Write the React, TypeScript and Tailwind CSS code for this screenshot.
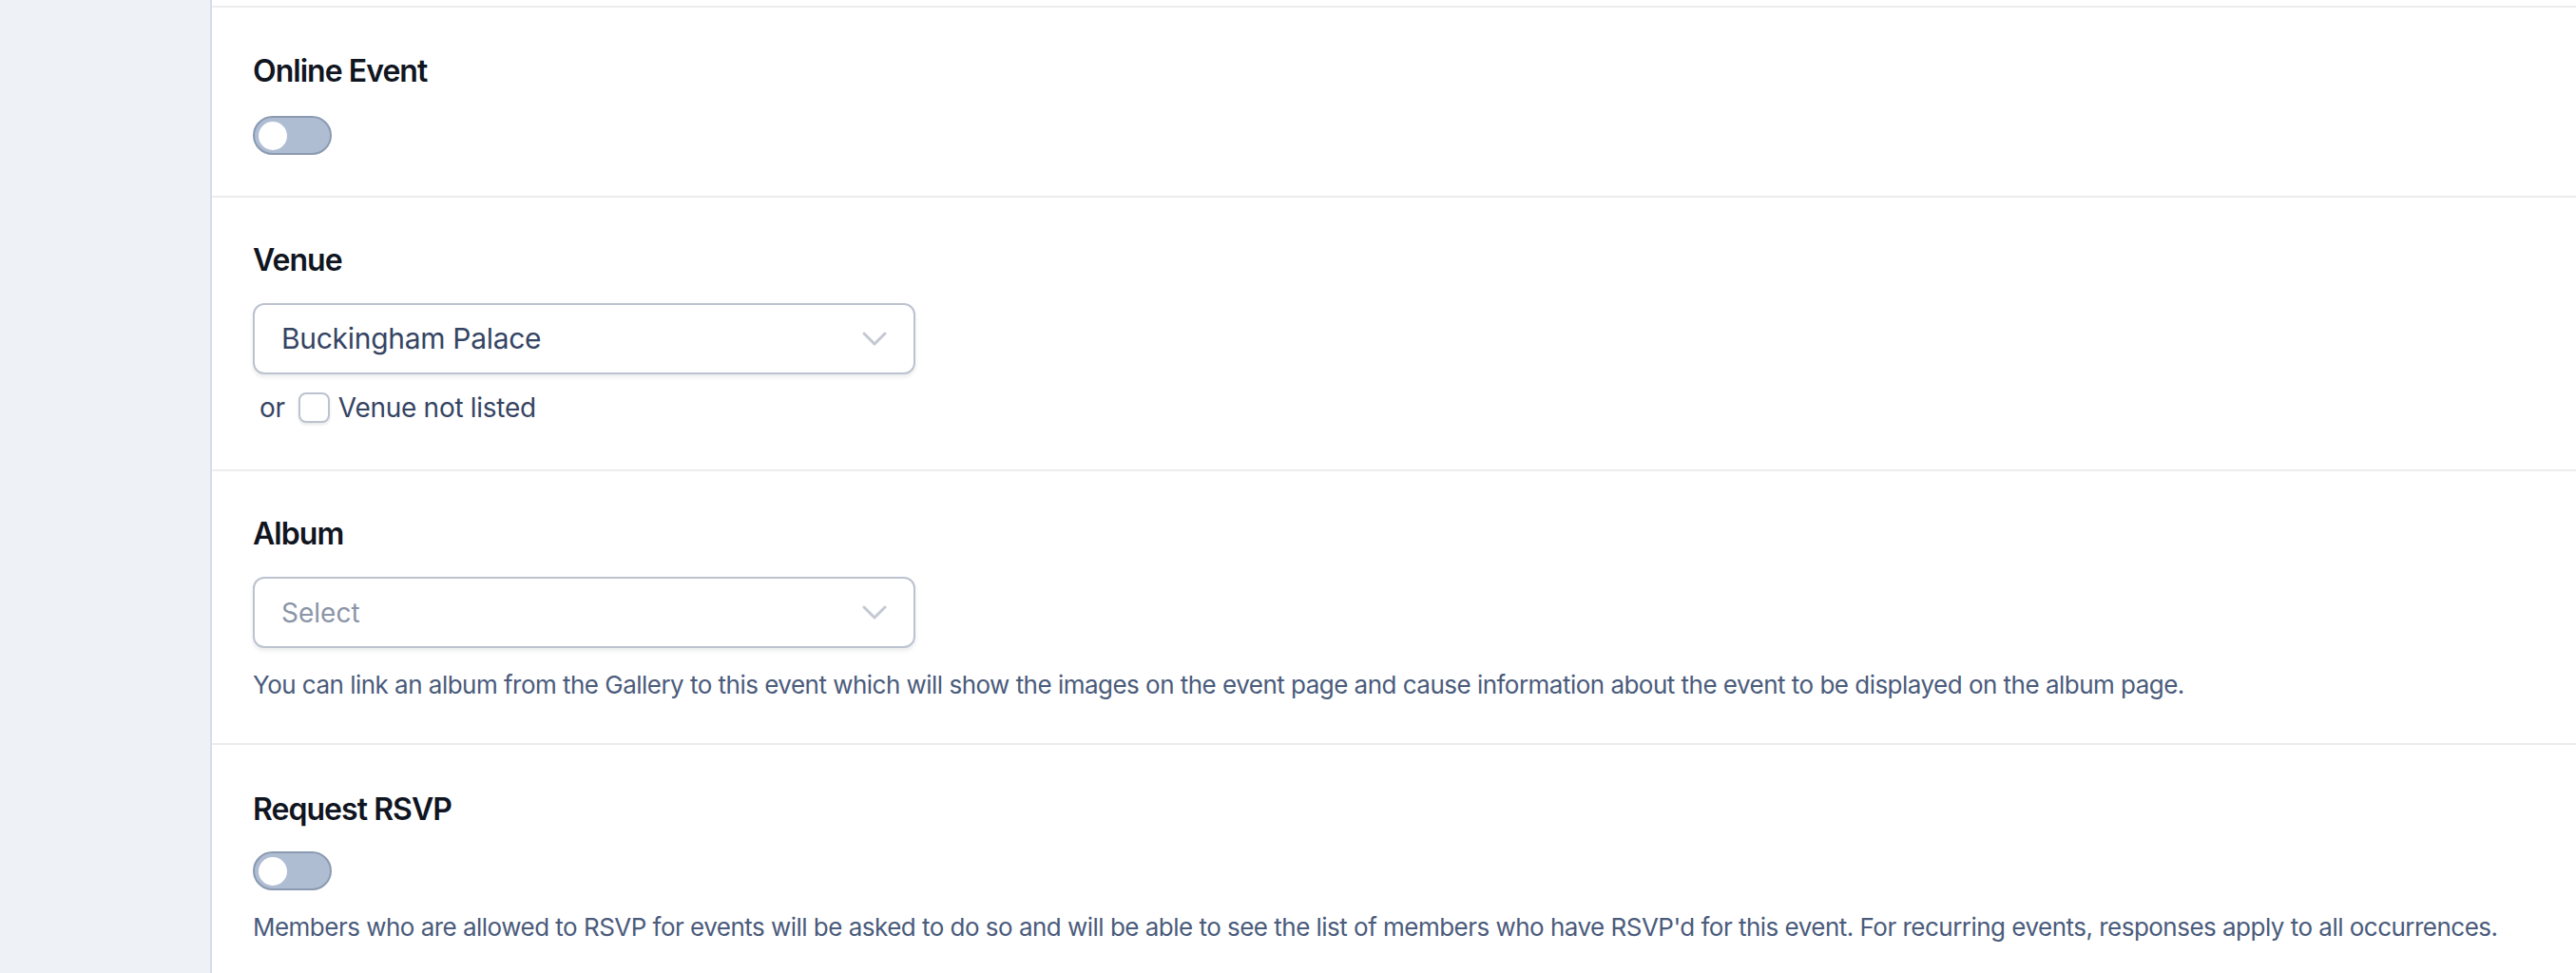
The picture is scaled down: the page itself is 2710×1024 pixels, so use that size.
import { useState } from "react";

function Toggle({ on, onChange }: { on: boolean; onChange: (v: boolean) => void }) {
  return (
    <button
      type="button"
      onClick={() => onChange(!on)}
      className={`flex h-[41px] w-[83px] items-center rounded-full border-2 px-[4px] ${
        on ? "justify-end border-[#3b6fd1] bg-[#4f86e8]" : "justify-start border-[#8b9ab1] bg-[#afbdd3]"
      }`}
    >
      <span className="block h-[30px] w-[30px] rounded-full bg-white" />
    </button>
  );
}

function Chevron() {
  return (
    <svg width="26" height="16" viewBox="0 0 26 16" fill="none" className="shrink-0">
      <polyline points="2,2 13,13 24,2" stroke="#c3c8d2" strokeWidth="3" strokeLinecap="round" strokeLinejoin="round" />
    </svg>
  );
}

function SelectBox({ value, placeholder }: { value?: string; placeholder: string }) {
  return (
    <div className="flex h-[75px] w-[697px] items-center justify-between rounded-[12px] border-2 border-[#bcc3cf] bg-white pl-[28px] pr-[28px] shadow-[0_3px_4px_rgba(15,23,42,0.08)]">
      {value ? (
        <span className="text-[30px] tracking-[-0.01em] text-[#354463]">{value}</span>
      ) : (
        <span className="text-[28px] text-[#8b95a7]">{placeholder}</span>
      )}
      <Chevron />
    </div>
  );
}

function Heading({ children }: { children: string }) {
  return <h3 className="text-[32px] font-semibold leading-[40px] tracking-[-0.03em] text-[#10151f]">{children}</h3>;
}

export default function App() {
  const [online, setOnline] = useState(false);
  const [rsvp, setRsvp] = useState(false);
  const [notListed, setNotListed] = useState(false);

  return (
    <div className="flex h-[1024px] w-full overflow-hidden bg-white" style={{ fontFamily: "Inter, 'Noto Sans', sans-serif" }}>
      <aside className="w-[223px] shrink-0 border-r-2 border-[#d6dde7] bg-[#eef2f7]" />
      <main className="flex-1 pt-[6px]">
        {/* Online Event */}
        <section className="border-t-2 border-[#ececec] pt-[47px] pb-[43px] pl-[43px]">
          <Heading>Online Event</Heading>
          <div className="mt-[27px]">
            <Toggle on={online} onChange={setOnline} />
          </div>
        </section>

        {/* Venue */}
        <section className="border-t-2 border-[#ececec] pt-[46px] pb-[45px] pl-[43px]">
          <Heading>Venue</Heading>
          <div className="mt-[25px]">
            <SelectBox value="Buckingham Palace" placeholder="Select" />
          </div>
          <div className="mt-[15px] flex h-[40px] items-center pl-[7px] text-[28px] tracking-[-0.01em] text-[#354463]">
            <span>or</span>
            <button
              type="button"
              onClick={() => setNotListed(!notListed)}
              className="ml-[14px] mr-[9px] h-[32px] w-[33px] rounded-[8px] border-2 border-[#bcc3cf] bg-white shadow-[0_2px_3px_rgba(15,23,42,0.1)]"
            />
            <span>Venue not listed</span>
          </div>
        </section>

        {/* Album */}
        <section className="border-t-2 border-[#ececec] pt-[46px] pb-[43px] pl-[43px]">
          <Heading>Album</Heading>
          <div className="mt-[25px]">
            <SelectBox placeholder="Select" />
          </div>
          <p className="mt-[21px] text-[26px] leading-[36px] tracking-[-0.02em] text-[#4a5b7b]">
            You can link an album from the Gallery to this event which will show the images on the event page and cause information about the event to be displayed on the album page.
          </p>
        </section>

        {/* Request RSVP */}
        <section className="border-t-2 border-[#ececec] pt-[48px] pb-[40px] pl-[43px]">
          <Heading>Request RSVP</Heading>
          <div className="mt-[24px]">
            <Toggle on={rsvp} onChange={setRsvp} />
          </div>
          <p className="mt-[21px] text-[26px] leading-[36px] tracking-[-0.02em] text-[#4a5b7b]">
            Members who are allowed to RSVP for events will be asked to do so and will be able to see the list of members who have RSVP'd for this event. For recurring events, responses apply to all occurrences.
          </p>
        </section>
      </main>
    </div>
  );
}
